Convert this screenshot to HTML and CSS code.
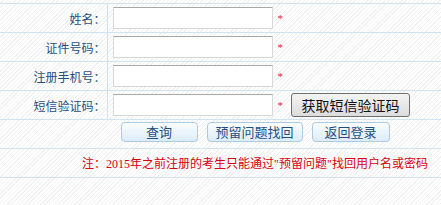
FILE: index.html
```html
<!DOCTYPE html>
<html lang="zh-CN">
<head>
    <meta charset="UTF-8">
    <title>找回用户名</title>
    <link rel="stylesheet" href="styles.css">
</head>
<body>
    <form class="find-form">
        <table class="find-table">
            <tr>
                <th>姓名：</th>
                <td><input type="text" class="txt"><span class="req">*</span></td>
            </tr>
            <tr>
                <th>证件号码：</th>
                <td><input type="text" class="txt"><span class="req">*</span></td>
            </tr>
            <tr>
                <th>注册手机号：</th>
                <td><input type="text" class="txt"><span class="req">*</span></td>
            </tr>
            <tr>
                <th>短信验证码：</th>
                <td>
                    <input type="text" class="txt"><span class="req">*</span>
                    <button type="button" class="sms-btn">获取短信验证码</button>
                </td>
            </tr>
            <tr>
                <td colspan="2" class="btn-row">
                    <button type="button" class="blue-btn btn-query">查询</button>
                    <button type="button" class="blue-btn btn-question">预留问题找回</button>
                    <button type="button" class="blue-btn btn-back">返回登录</button>
                </td>
            </tr>
            <tr>
                <td colspan="2" class="note">注：2015年之前注册的考生只能通过"预留问题"找回用户名或密码</td>
            </tr>
        </table>
    </form>
</body>
</html>
```

FILE: styles.css
```css
* {
    margin: 0;
    padding: 0;
    box-sizing: border-box;
}

body {
    font-family: "Liberation Serif", "Noto Sans CJK SC", serif;
    font-size: 12px;
    min-height: 205px;
    background: repeating-linear-gradient(135deg, #ffffff 0, #ffffff 2px, #f2f2f2 2px, #f2f2f2 3px);
    padding-top: 3px;
}

.find-table {
    width: 100%;
    border-collapse: collapse;
}

.find-table tr {
    height: 29px;
    border-top: 1px solid #d2e2ee;
    border-bottom: 1px solid #d2e2ee;
}

.find-table th {
    width: 107px;
    text-align: right;
    font-weight: normal;
    color: #1f4f7d;
    border-right: 1px solid #d2e2ee;
    padding-right: 1px;
    font-family: "Noto Sans CJK SC", sans-serif;
}

.find-table td {
    padding-left: 5px;
    vertical-align: middle;
}

.txt {
    width: 160px;
    height: 22px;
    border: 1px solid #d8d8d8;
    border-top-color: #a9a9a9;
    background: #fff;
    vertical-align: middle;
}

.req {
    color: #e2232b;
    font-size: 11px;
    margin-left: 5px;
    vertical-align: middle;
}

.sms-btn {
    width: 119px;
    height: 24px;
    margin-left: 5px;
    font-family: "Noto Sans CJK SC", sans-serif;
    font-size: 14px;
    color: #111;
    background: linear-gradient(#f4f4f4, #dcdcdc);
    border: 1px solid #707070;
    border-radius: 3px;
    vertical-align: middle;
}

.find-table td.btn-row,
.find-table td.note {
    text-align: center;
    padding-left: 69px;
}

.btn-row {
    padding-bottom: 4px;
}

.blue-btn {
    height: 20px;
    font-family: "Noto Sans CJK SC", sans-serif;
    font-size: 13px;
    line-height: 18px;
    color: #1f4f7d;
    background: linear-gradient(#fbfdff, #dcecf8);
    border: 1px solid #abcbe3;
    border-radius: 4px;
    vertical-align: middle;
}

.btn-query {
    width: 77px;
}

.btn-question {
    width: 96px;
    margin-left: 6px;
}

.btn-back {
    width: 78px;
    margin-left: 6px;
}

.note {
    color: #d9000d;
}
```
